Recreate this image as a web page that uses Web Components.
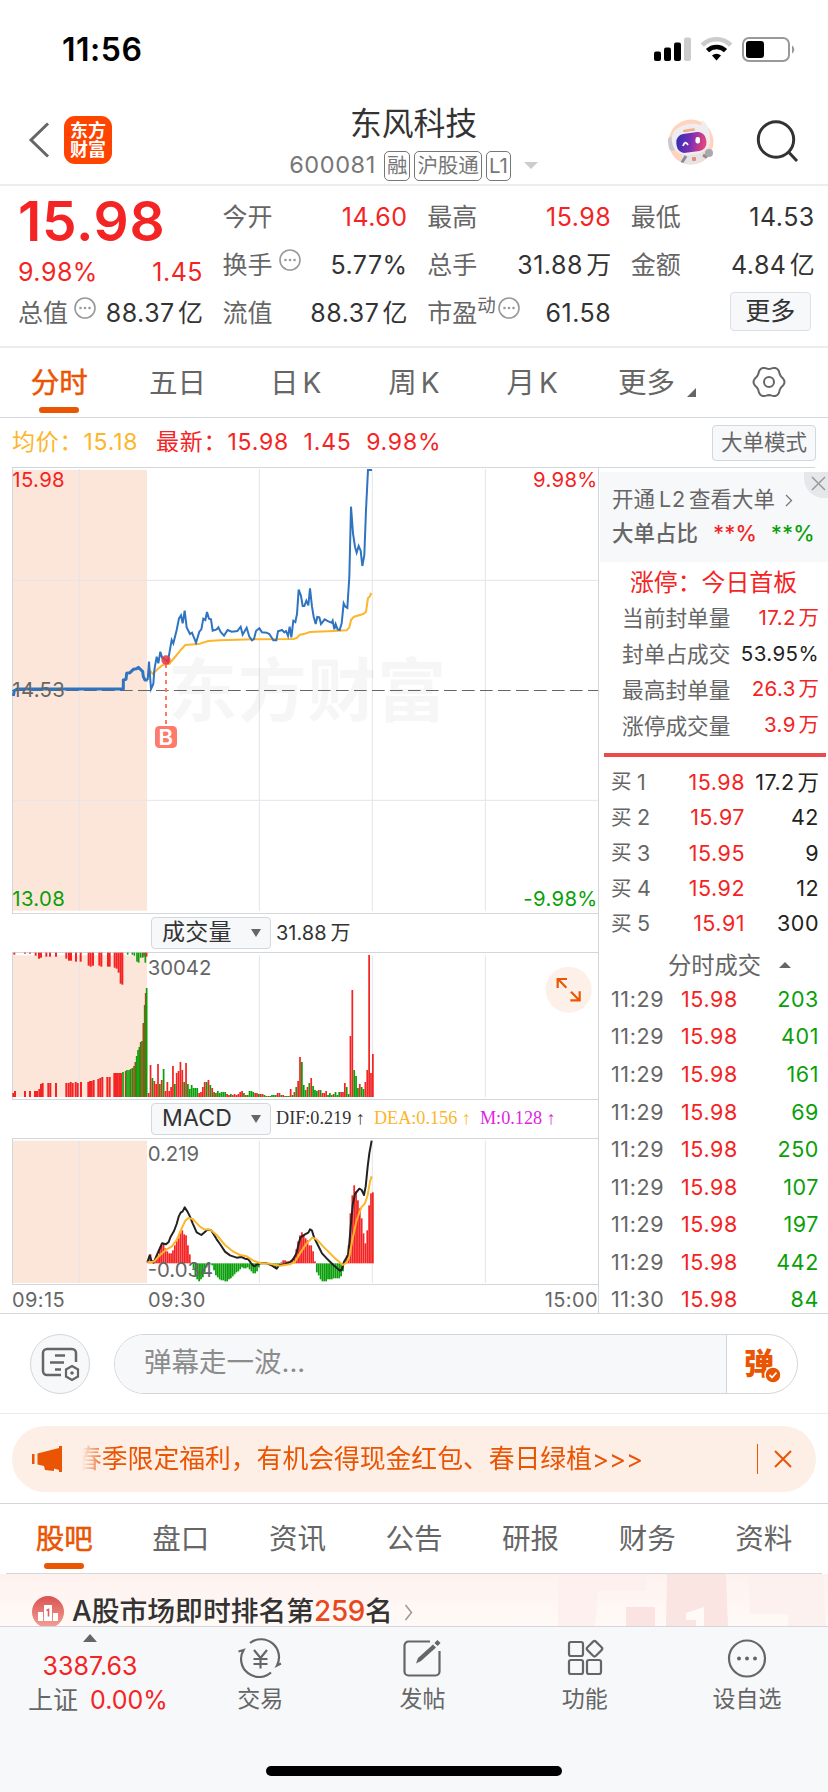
<!DOCTYPE html>
<html lang="zh-CN">
<head>
<meta charset="utf-8">
<meta name="viewport" content="width=device-width">
<title>东风科技 600081</title>
<style>
  html, body { margin: 0; padding: 0; }
  body {
    --red: #f42424;
    --green: #0a9f0a;
    --orange: #ea5504;
    --gray: #666;
    --ink: #333;
    --line: #d3d6da;
    --panel: #f7f8fa;
    width: 828px;
    height: 1792px;
    overflow: hidden;
    background: #fff;
    color: var(--ink);
    font-family: Inter, "Noto Sans CJK SC", sans-serif;
    font-size: 25px;
    line-height: 1.2;
    white-space: nowrap;
  }
</style>
</head>
<body>
<stock-page></stock-page>

<script>
// Shared base: every element only supplies its css and its markup.
class BaseElement extends HTMLElement {
  constructor() {
    super();
    this.attachShadow({ mode: "open" });
  }

  connectedCallback() {
    this.shadowRoot.innerHTML = `
      <style>
        :host { display: block; box-sizing: border-box; }
        * { box-sizing: border-box; }
        svg { display: block; flex: none; }
        .u { margin-left: .13em; letter-spacing: 0; }
        ${this.css()}
      </style>
      ${this.html()}`;
  }

  css() { return ""; }
  html() { return "<slot></slot>"; }
  attr(name) { return this.getAttribute(name) || ""; }
}

// "31.88万" -> number plus a slightly spaced unit
const withUnit = (s) => s.replace(/([万亿])$/, '<span class="u">$1</span>');

class StatusBar extends BaseElement {
  css() {
    return `
      :host { display: flex; height: 100px; padding: 0 33px 0 62px; align-items: center; justify-content: space-between; color: #000; }
      .time { font-size: 32px; font-weight: 600; letter-spacing: .5px; }`;
  }
  html() {
    return `
      <span class="time">11:56</span>
      <svg width="142" height="26" viewBox="0 0 142 26">
        <rect x="1" y="14.500" width="7" height="9.500" rx="2"/>
        <rect x="11" y="10.500" width="7" height="13.500" rx="2"/>
        <rect x="21" y="5.500" width="7" height="18.500" rx="2"/>
        <rect x="31" y="0.500" width="7" height="23.500" rx="2" fill="#ccc"/>
        <g fill="none" stroke-width="4.600">
          <path d="M49.300 8.200a20 20 0 0 1 28.400 0" stroke="#ccc"/>
          <path d="M54.500 13.600a13 13 0 0 1 18 0" stroke="#000"/>
        </g>
        <path d="M59 18.600a6.500 6.500 0 0 1 9 0l-4.500 5z"/>
        <rect x="90" y="1" width="46" height="23" rx="6" fill="none" stroke="#999" stroke-width="2"/>
        <rect x="93" y="4" width="18" height="17" rx="3"/>
        <path d="M139 8.500c3 1.500 3 6.500 0 8z" fill="#999"/>
      </svg>`;
  }
}
customElements.define("status-bar", StatusBar);

class StockHeader extends BaseElement {
  css() {
    return `
      :host { display: grid; grid-template-columns: 1fr auto 1fr; height: 86px; border-bottom: 2px solid #ededed; padding: 0 29px 0 28px; }
      .left { display: flex; align-items: center; gap: 14px; padding-bottom: 4px; }
      .logo { width: 48px; height: 48px; border-radius: 11px; background: #ff4400; color: #fff; font-size: 18px; font-weight: 700; line-height: 19px; text-align: center; padding-top: 5px; }
      .mid { display: flex; flex-direction: column; align-items: center; }
      .name { font-size: 31.800px; line-height: 36px; margin-top: 6px; }
      .sub { display: flex; align-items: center; gap: 4px; height: 31px; margin-top: 8px; color: #777; }
      .code { font-size: 23.500px; margin-right: 4px; letter-spacing: .6px; }
      .tag { height: 30px; border: 1.500px solid #777; border-radius: 5px; font-size: 20.500px; line-height: 27px; padding: 0 2px; }
      .tri { border: 7px solid transparent; border-top: 7px solid #ccc; border-bottom: 0; margin-left: 9px; }
      .right { display: flex; align-items: center; justify-content: flex-end; gap: 41px; }`;
  }
  html() {
    return `
      <div class="left">
        <svg width="22" height="36" viewBox="0 0 22 36"><path d="M20 1.500 3 18l17 16.500" fill="none" stroke="#666" stroke-width="3"/></svg>
        <div class="logo">东方<br>财富</div>
      </div>
      <div class="mid">
        <div class="name">东风科技</div>
        <div class="sub">
          <span class="code">600081</span><span class="tag">融</span><span class="tag">沪股通</span><span class="tag">L1</span>
          <i class="tri"></i>
        </div>
      </div>
      <div class="right">
        <svg width="46" height="46" viewBox="0 0 46 46">
          <defs>
            <linearGradient id="face" x1="0" y1="0" x2="1" y2=".2"><stop offset="0" stop-color="#2a2cb4"/><stop offset=".55" stop-color="#7a2fb5"/><stop offset="1" stop-color="#e0447c"/></linearGradient>
            <clipPath id="disc"><circle cx="23" cy="23" r="22.500"/></clipPath>
          </defs>
          <circle cx="23" cy="23" r="22.500" fill="#ffd3bd"/>
          <g clip-path="url(#disc)">
            <path d="M14 36l9-3 12 1 1 12H12z" fill="#e6e3e6"/>
            <path d="M13 45l5-8M35 36l5 3" stroke="#8d8b93" stroke-width="3"/>
            <rect x="24" y="38" width="4" height="4" rx="1" fill="#e98c72"/>
          </g>
          <g transform="rotate(-8 23 21)">
            <rect x="0" y="15" width="8" height="14" rx="4" fill="#c9c8d0"/>
            <path d="M4 20C4 9 13 5 24 5c5 0 8 1 11 3l2-5c5 4 6 13 5 19 0 10-7 14-19 14S4 31 4 20z" fill="#f0edf1"/>
            <rect x="8" y="14" width="30" height="19" rx="8" fill="url(#face)"/>
          </g>
          <rect x="15" y="10" width="12" height="2.500" rx="1" fill="#f0ad80" transform="rotate(-8 21 11)"/>
          <path d="M15 27q2-6 5-1" fill="none" stroke="#fff" stroke-width="1.800"/>
          <rect x="27.500" y="18" width="4.500" height="6.500" rx="2" fill="#fff"/>
          <circle cx="41" cy="34" r="4" fill="#a9a8b0"/>
        </svg>
        <svg width="44" height="44" viewBox="0 0 44 44" fill="none" stroke="#333" stroke-width="3"><circle cx="21" cy="19.500" r="17.700"/><path d="M33.500 32 42 41"/></svg>
      </div>`;
  }
}
customElements.define("stock-header", StockHeader);

class DotMark extends BaseElement {
  css() { return `:host { display: inline-block; width: 22px; }`; }
  html() {
    return `<svg width="22" height="22" viewBox="0 0 22 22"><circle cx="11" cy="11" r="10" fill="none" stroke="#999" stroke-width="1.600"/><g fill="#999"><circle cx="6.500" cy="11" r="1.300"/><circle cx="11" cy="11" r="1.300"/><circle cx="15.500" cy="11" r="1.300"/></g></svg>`;
  }
}
customElements.define("dot-mark", DotMark);

class QuoteCell extends BaseElement {
  css() {
    return `
      :host { display: flex; align-items: center; justify-content: space-between; height: 48px; color: var(--ink); letter-spacing: .5px; }
      :host([up]) { color: var(--red); }
      .label { display: flex; align-items: center; color: var(--gray); letter-spacing: 0; }
      sup { font-size: 18.500px; line-height: 1; margin-bottom: 16px; }
      dot-mark { margin: 0 0 10px 6px; }
      sup + dot-mark { margin-left: 2px; }`;
  }
  html() {
    const sup = this.attr("sup");
    return `<span class="label">${this.attr("label")}${sup ? `<sup>${sup}</sup>` : ""}${this.hasAttribute("info") ? "<dot-mark></dot-mark>" : ""}</span>
      <span>${withUnit(this.attr("value"))}</span>`;
  }
}
customElements.define("quote-cell", QuoteCell);

class QuoteBoard extends BaseElement {
  css() {
    return `
      :host { display: grid; grid-template-columns: 185px 185px 184px 184px; column-gap: 19.600px; height: 162px; padding: 7px 12px 0 18px; border-bottom: 2px solid #ededed; }
      .price { font-size: 55px; font-weight: 600; line-height: 56px; color: var(--red); letter-spacing: .7px; }
      .chg { display: flex; justify-content: space-between; color: var(--red); line-height: 30px; margin-top: 8px; letter-spacing: .5px; }
      .first quote-cell { margin-top: 2px; }
      .more { display: flex; justify-content: flex-end; align-items: center; height: 44px; padding-right: 4px; }
      .more span { width: 81px; height: 39px; border: 1.500px solid #dcdfe5; border-radius: 4px; background: var(--panel); text-align: center; line-height: 36px; }`;
  }
  html() {
    return `
      <div class="first">
        <div class="price">15.98</div>
        <div class="chg"><span>9.98%</span><span>1.45</span></div>
        <quote-cell label="总值" info value="88.37亿"></quote-cell>
      </div>
      <div>
        <quote-cell label="今开" value="14.60" up></quote-cell>
        <quote-cell label="换手" info value="5.77%"></quote-cell>
        <quote-cell label="流值" value="88.37亿"></quote-cell>
      </div>
      <div>
        <quote-cell label="最高" value="15.98" up></quote-cell>
        <quote-cell label="总手" value="31.88万"></quote-cell>
        <quote-cell label="市盈" sup="动" info value="61.58"></quote-cell>
      </div>
      <div>
        <quote-cell label="最低" value="14.53"></quote-cell>
        <quote-cell label="金额" value="4.84亿"></quote-cell>
        <div class="more"><span>更多</span></div>
      </div>`;
  }
}
customElements.define("quote-board", QuoteBoard);

class TabItem extends BaseElement {
  css() {
    return `
      :host { flex: 1; display: flex; flex-direction: column; align-items: center; height: 100%; padding-top: 17px; color: var(--gray); font-size: 28.500px; line-height: 36px; }
      :host([active]) { color: var(--orange); -webkit-text-stroke: .5px var(--orange); }
      .bar { display: none; width: 40px; height: 6px; border-radius: 3px; background: var(--orange); margin-top: 6px; }
      :host([active]) .bar { display: block; }
      .text { display: flex; align-items: center; }`;
  }
  html() { return `<span class="text"><slot></slot></span><i class="bar"></i>`; }
}
customElements.define("tab-item", TabItem);

class TabStrip extends BaseElement {
  css() { return `:host { display: flex; height: 70px; border-bottom: 1px solid var(--line); }`; }
}
customElements.define("tab-strip", TabStrip);

class InfoRow extends BaseElement {
  css() {
    return `
      :host { display: flex; align-items: center; height: 49px; padding: 0 12px 0 12px; font-size: 23px; color: var(--red); letter-spacing: .8px; }
      .avg { color: #fdb52a; width: 144px; }
      .avg, .now { display: flex; }
      .now span { margin-right: 14.500px; }
      .btn { margin-left: auto; width: 104px; height: 36px; border: 1.500px solid #d3d7de; border-radius: 4px; background: var(--panel); color: var(--gray); font-size: 21.500px; line-height: 33px; text-align: center; letter-spacing: 0; }`;
  }
  html() {
    return `
      <div class="avg">均价：15.18</div>
      <div class="now"><span>最新：15.98</span><span>1.45</span><span>9.98%</span></div>
      <div class="btn">大单模式</div>`;
  }
}
customElements.define("info-row", InfoRow);

// Charts are drawn on a grid of three units to a pixel.
const GRID_X = [238, 778, 1117, 1456];
const UP = "#f42424";
const DOWN = "#0a9f0a";
const STEP = 5.605;

const gridLines = (top, bottom) =>
  GRID_X.map((x) => `<path d="M${x} ${top}V${bottom}" stroke="#e3e5ec" stroke-width="3"/>`).join("");

class PriceChart extends BaseElement {
  html() {
    return `
      <svg width="586" height="447" viewBox="36 21 1758 1341" font-size="61" letter-spacing="1">
        <rect x="38" y="30" width="403" height="1322" fill="#fce6da"/>
        ${gridLines(27, 1353)}
        <path d="M36 361H1794M36 1021H1794" stroke="#e3e5ec" stroke-width="3"/>
        <text x="504" y="769" font-size="208" font-weight="700" fill="#000" fill-opacity=".035">东方财富</text>
        <path d="M36 22.500H1794M36 1360.500H1794M37.500 22V1360" stroke="#d3d6da" stroke-width="3" fill="none"/>
        <path d="M36 691.500H1794" stroke="#666" stroke-width="3" stroke-dasharray="38 16"/>
        <g fill="none" stroke-linejoin="round">
          <polyline stroke="#fdb52a" stroke-width="6" points="443,655 450,632 458,642 470,630 485,617 497,612 508,612 515,603 530,585 542,570 556,555 600,551 625,543 660,541 760,538 880,537 890,534 900,524 915,521 930,516 1000,513 1040,511 1048,502 1053,480 1062,470 1090,462 1098,455 1104,414 1109,410 1114,399"/>
          <path stroke="#2f74c0" stroke-width="9" d="M40 708L43 692 52 687H370V660L378 658 380 640 390 638 400 628 410 626 415 622 422 629 428 634 430 650 435 660H443"/>
          <polyline stroke="#2f74c0" stroke-width="6" stroke-linejoin="miter" points="443,660 447,605 453,687 460,672 463,630 470,590 475,610 481,575 486,592 497,600 503,605 508,580 515,540 520,550 530,510 537,475 543,466 548,490 554,452 560,502 570,522 576,518 588,548 598,515 604,508 610,476 616,480 621,456 627,476 633,478 638,512 650,508 655,502 662,516 672,527 683,510 695,515 712,513 722,500 728,524 740,503 748,530 756,541 762,537 768,513 778,505 786,517 800,518 808,522 820,541 829,541 834,514 846,510 853,517 858,513 864,528 869,500 874,532 880,482 886,486 891,462 896,389 903,408 908,438 913,438 919,422 925,436 930,385 936,440 941,470 947,492 952,471 958,472 963,492 974,478 985,484 995,488 998,482 1003,508 1007,492 1013,508 1019,510 1025,490 1031,430 1036,440 1042,444 1048,350 1053,140 1059,220 1065,260 1070,278 1076,258 1082,272 1087,318 1093,285 1098,150 1104,30 1116,30"/>
        </g>
        <path d="M498 612V798" stroke="#ff7a6b" stroke-width="6" stroke-dasharray="12 12"/>
        <circle cx="498" cy="600" r="14" fill="#e8343f" fill-opacity=".85"/>
        <rect x="465" y="798" width="66" height="66" rx="13" fill="#ff7a6b"/>
        <text x="498" y="854" font-size="66" font-weight="600" fill="#fff" text-anchor="middle">B</text>
        <text x="37" y="80" fill="#f42424">15.98</text>
        <text x="37" y="711" fill="#666">14.53</text>
        <text x="37" y="1338" fill="#0a9f0a">13.08</text>
        <text x="1793" y="80" fill="#f42424" text-anchor="end">9.98%</text>
        <text x="1793" y="1338" fill="#0a9f0a" text-anchor="end">-9.98%</text>
      </svg>`;
  }
}
customElements.define("price-chart", PriceChart);

// Minute volume from 09:30 to 11:30: height in px, r = up, g = down.
const VOLUME = ("4r 32r 19g 16r 13r 33r 13g 17r 28g 6r 15r 6r 10r 31r 13g 24r 26r 35r 27r 15g 34r 13g 8g 12g 9g 9g 9g 4r 5r 10r 15r 15g 17r 12g 9r 5g 4r 6g 4g 5g 5g 5g 3r 2r 3g 2r 3r 2r 3r 5r 6r 4g 2r 2g 6g 6g 5g 4r 4r 3g 3r 3r 2g " +
  "1g 1r 1g 2g 2g 2g 4r 4r 2g 2r 1r 1g 1g 8r 2g 5r 10g 16r 40r 35g 12g 7g 10r 14g 19r 11g 7g 6g 7r 7g 4r 4r 6r 2g 4g 2g 3r 5g 2g 5g 5r 5r 14r 10g 3g 61r 107r 27g 21g 9g 13r 10g 8g 15r 27r 142r 24r 43r").split(" ");

// Call auction: matched volume at the bottom (x, height), unmatched hanging from the top.
const AUCTION = [[40,4],[45,6],[75,6],[90,6],[105,6],[111,6],[118,8],[123,13],[128,14],[145,14],[151,14],[168,14],[199,14],[206,14],[212,15],[218,14],[227,15],[233,14],[243,15],[265,15],[270,16],[275,16],[281,17],[295,18],[301,19],[307,20],[322,20],[329,20],[343,24],[348,24],[353,24],[358,24],[363,24]];
const AUCTION_G = [[369,25,0],[377,26,1],[381,27,0],[387,27,0],[392,28,0],[397,29,1],[402,31,0],[406,35,1],[410,41,0],[414,47,0],[418,50,0],[422,55,1],[426,56,0],[430,74,1],[434,92,0],[437,104,1],[440,109,0]];
const HANGING = [[43,2],[75,1],[90,1],[107,3],[117,6],[123,5],[139,4],[150,4],[168,4],[199,6],[207,8],[213,8],[228,9],[242,9],[266,13],[272,14],[279,13],[298,13],[304,14],[324,14],[329,14],[344,15],[350,16],[356,20],[362,31],[367,32]];
const HANGING_G = [[383,2,0],[397,2,0],[403,3,0],[411,9,0],[416,10,0],[422,5,0],[428,5,0],[432,4,1],[436,10,0],[440,4,1]];

const bar = (x, y, h, color, w = 5.2) => `<rect x="${x - w / 2}" y="${y}" width="${w}" height="${h}" fill="${color}"/>`;

class VolumeChart extends BaseElement {
  html() {
    const minutes = VOLUME.map((v, i) => {
      const h = parseInt(v) * 3;
      return bar(446 + i * STEP, 591 - h, h, v.endsWith("r") ? UP : DOWN);
    });
    const matched = AUCTION.map(([x, h]) => bar(x, 591 - h * 3, h * 3, UP, 6))
      .concat(AUCTION_G.map(([x, h, up]) => bar(x, 591 - h * 3, h * 3, up ? "#a34a18" : DOWN, 5)));
    const hanging = HANGING.map(([x, h]) => bar(x, 158, h * 3, UP, 6))
      .concat(HANGING_G.map(([x, h, up]) => bar(x, 158, h * 3, up ? UP : DOWN, 5)));
    return `
      <svg width="586" height="148" viewBox="36 156 1758 444" font-size="61">
        <rect x="38" y="166" width="403" height="425" fill="#fce6da"/>
        ${gridLines(166, 591)}
        <path d="M36 157.500H1794M36 598.500H1794M37.500 157V598" stroke="#d3d6da" stroke-width="3" fill="none"/>
        ${matched.join("")}${hanging.join("")}${minutes.join("")}
        <text x="443" y="225" fill="#666">30042</text>
        <circle cx="1706" cy="269" r="69" fill="#fdf0e8"/>
        <g transform="translate(1706 269)" fill="none" stroke="#ea5504" stroke-width="6.500">
          <path d="M-33-5V-32H-5M-32-32-7-6M33 5V32H5M32 32 7 6"/>
        </g>
      </svg>`;
  }
}
customElements.define("volume-chart", VolumeChart);

const MACD = [4,9,3,1,4,8,15,18,20,15,12,10,10,13,18,22,25,30,33,29,28,18,9,0,-5,-12,-16,-18,-16,-14,-9,-4,-1,-1,-2,-7,-12,-14,-16,-17,-17,-18,-18,-16,-15,-13,-11,-9,-8,-6,-4,-5,-5,-4,-6,-8,-10,-10,-8,-4,0,0,0,0,0,0,-1,-2,-4,-3,-1,1,3,3,2,2,3,3,7,14,22,28,31,28,25,23,18,18,12,2,-9,-12,-16,-18,-18,-18,-16,-16,-16,-15,-15,-15,-15,-13,-8,3,8,18,50,68,78,72,63,55,45,30,20,33,58,70,71];

class MacdChart extends BaseElement {
  html() {
    const bars = MACD.map((v, i) => bar(446 + i * STEP, v > 0 ? 1090 - v * 3 : 1090, Math.abs(v) * 3, v > 0 ? UP : DOWN));
    return `
      <svg width="586" height="147" viewBox="36 714 1758 441" font-size="61">
        <rect x="38" y="722" width="403" height="427" fill="#fce6da"/>
        ${gridLines(722, 1149)}
        <path d="M36 715.500H1794M36 1153.500H1794M37.500 715V1153" stroke="#d3d6da" stroke-width="3" fill="none"/>
        ${bars.join("")}
        <g fill="none" stroke-width="6" stroke-linejoin="round">
          <polyline stroke="#222" points="442,1088 449,1066 455,1085 461,1088 472,1062 486,1030 498,1033 506,1026 512,1010 522,993 530,972 536,950 542,938 548,934 554,922 562,934 570,950 578,970 590,997 604,1005 612,998 622,989 633,990 650,1018 660,1032 675,1055 690,1066 710,1073 725,1071 735,1076 745,1078 755,1092 762,1099 772,1093 785,1089 800,1090 815,1096 830,1106 838,1095 855,1092 872,1086 882,1074 890,1058 895,1035 901,1013 915,1003 925,998 930,988 936,992 942,1012 955,1038 966,1060 980,1075 1000,1095 1020,1112 1026,1108 1032,1085 1044,1066 1048,1030 1052,980 1058,915 1065,882 1078,866 1085,870 1092,885 1097,860 1103,800 1108,760 1115,722"/>
          <polyline stroke="#fdb52a" points="442,1087 462,1085 480,1065 500,1048 515,1040 530,1020 545,985 556,962 565,954 578,957 600,980 613,988 632,989 650,1005 675,1035 700,1055 720,1065 740,1069 760,1082 780,1089 810,1091 840,1097 870,1093 885,1085 900,1060 920,1030 937,1013 950,1018 970,1040 1000,1070 1028,1095 1040,1088 1048,1070 1057,1020 1070,960 1084,922 1095,910 1103,885 1110,845 1115,829"/>
        </g>
        <text x="443" y="782" fill="#666">0.219</text>
        <text x="443" y="1130" fill="#666">-0.034</text>
      </svg>`;
  }
}
customElements.define("macd-chart", MacdChart);

class IndicatorRow extends BaseElement {
  css() {
    return `
      :host { display: flex; align-items: center; height: 38px; padding-left: 139px; font-size: 20px; }
      .select { display: flex; align-items: center; justify-content: space-between; width: 120px; height: 32px; padding: 0 9px 0 10px; border: 1px solid #d3d7de; border-radius: 4px; background: var(--panel); font-size: 23px; letter-spacing: .2px; margin-right: 5px; }
      .select i { border: 5px solid transparent; border-top: 8px solid #666; border-bottom: 0; }`;
  }
  html() { return `<div class="select"><span>${this.attr("name")}</span><i></i></div><slot></slot>`; }
}
customElements.define("indicator-row", IndicatorRow);

class ChartColumn extends BaseElement {
  css() {
    return `
      :host { width: 598px; padding-left: 12px; }
      .macd { display: flex; gap: 9px; font-family: "Liberation Serif", serif; font-size: 18.200px; }
      .dea { color: #fdb52a; }
      .m { color: #e01fe0; }
      .times { display: flex; height: 28px; align-items: center; color: var(--gray); font-size: 20px; padding-top: 2px; letter-spacing: .4px; }
      .times span:first-child { width: 136px; }
      .times span:last-child { margin-left: auto; }`;
  }
  html() {
    return `
      <price-chart></price-chart>
      <indicator-row name="成交量"><span>31.88<span style="margin-left:4px">万</span></span></indicator-row>
      <volume-chart></volume-chart>
      <indicator-row name="MACD"><span class="macd"><span>DIF:0.219 ↑</span><span class="dea">DEA:0.156 ↑</span><span class="m">M:0.128 ↑</span></span></indicator-row>
      <macd-chart></macd-chart>
      <div class="times"><span>09:15</span><span>09:30</span><span>15:00</span></div>`;
  }
}
customElements.define("chart-column", ChartColumn);

const LIMIT = [["当前封单量", "17.2万", "up"], ["封单占成交", "53.95%", ""], ["最高封单量", "26.3万", "up"], ["涨停成交量", "3.9万", "up"]];
const BIDS = [["1", "15.98", "17.2万"], ["2", "15.97", "42"], ["3", "15.95", "9"], ["4", "15.92", "12"], ["5", "15.91", "300"]];
const TICKS = [["11:29", 203], ["11:29", 401], ["11:29", 161], ["11:29", 69], ["11:29", 250], ["11:29", 107], ["11:29", 197], ["11:29", 442], ["11:30", 84]];

class OrderBook extends BaseElement {
  css() {
    return `
      :host { position: relative; width: 230px; height: 846px; border-left: 1px solid var(--line); font-size: 21px; color: #222; }
      .promo { height: 90px; margin: 5px 0 0 1px; padding: 10px 0 0 12px; background: var(--panel); color: var(--gray); font-size: 21.500px; }
      .promo > div { display: flex; align-items: center; height: 36px; }
      .promo > div + div { height: 32px; font-weight: 500; }
      .promo svg { margin-left: 10px; }
      .promo .l2 { margin: 0 3px 0 4px; letter-spacing: .8px; }
      .close { position: absolute; right: 0; top: 5px; width: 24px; height: 26px; border-radius: 0 0 0 20px; background: #e6e7ea; }
      .title { height: 38px; line-height: 42px; text-align: center; color: var(--red); font-size: 23.900px; }
      .row { display: flex; align-items: center; justify-content: space-between; padding: 0 9px 0 23px; height: 35.900px; font-size: 20.500px; letter-spacing: .4px; }
      .row .k { font-size: 21.700px; letter-spacing: 0; color: var(--gray); }
      .up { color: var(--red); }
      .down { color: var(--green); }
      .rule { height: 4px; margin: 9.500px 2px 8px 5px; background: #eb4b4b; }
      .bid { display: grid; grid-template-columns: 26px 24px 1fr 74px; align-items: center; height: 35.400px; padding: 0 9px 0 12px; font-size: 21.500px; letter-spacing: .5px; text-align: right; }
      .bid span:nth-child(-n+2) { color: var(--gray); text-align: left; font-size: 20.500px; }
      .bid span:nth-child(2) { font-size: 21.500px; }
      .bid .u { font-size: 21.500px !important; color: inherit !important; }
      .sub { display: flex; align-items: center; justify-content: center; height: 39px; color: var(--gray); font-size: 23.300px; padding: 8px 0 0 32px; }
      .sub i { border: 6px solid transparent; border-bottom: 6px solid #666; border-top: 0; margin-left: 18px; margin-bottom: 2px; }
      .tick { display: grid; grid-template-columns: 70px 60px 1fr; align-items: center; height: 37.550px; padding: 0 9px 0 12px; font-size: 21.500px; letter-spacing: .6px; }
      .tick:last-child { height: 28px; padding-bottom: 0; margin-top: 4.800px; }
      .tick span:first-child { color: var(--gray); }
      .tick .down { text-align: right; }`;
  }
  html() {
    return `
      <div class="promo">
        <div>开通<span class="l2">L2</span>查看大单<svg width="8" height="13" viewBox="0 0 8 13"><path d="M1 1l5.500 5.500L1 12" fill="none" stroke="#777" stroke-width="1.300"/></svg></div>
        <div>大单占比<span class="up" style="margin-left:15px">**%</span><span class="down" style="margin-left:14px">**%</span></div>
      </div>
      <div class="close"><svg width="24" height="24" viewBox="0 0 24 24"><path d="M8 5l13 13M21 5L8 18" stroke="#999" stroke-width="1.500"/></svg></div>
      <div class="title">涨停：今日首板</div>
      ${LIMIT.map(([k, v, c]) => `<div class="row"><span class="k">${k}</span><span class="${c}">${withUnit(v)}</span></div>`).join("")}
      <div class="rule"></div>
      ${BIDS.map(([n, p, q]) => `<div class="bid"><span>买</span><span>${n}</span><span class="up">${p}</span><span>${withUnit(q)}</span></div>`).join("")}
      <div class="sub">分时成交<i></i></div>
      ${TICKS.map(([t, q]) => `<div class="tick"><span>${t}</span><span class="up">15.98</span><span class="down">${q}</span></div>`).join("")}`;
  }
}
customElements.define("order-book", OrderBook);

class DanmuBar extends BaseElement {
  css() {
    return `
      :host { display: flex; height: 100px; padding: 20px 30px 0; gap: 24px; border-bottom: 1.500px solid #ebebeb; }
      .round { width: 60px; height: 60px; border: 1px solid var(--line); border-radius: 50%; background: var(--panel); display: flex; align-items: center; justify-content: center; }
      .pill { display: flex; width: 684px; height: 60px; border: 1px solid var(--line); border-radius: 30px; overflow: hidden; }
      .ph { flex: 1; padding-left: 29px; line-height: 55px; background: var(--panel); color: #8c8c8c; font-size: 27.500px; }
      .send { position: relative; width: 71px; border-left: 1px solid var(--line); padding-left: 17px; color: var(--orange); font-size: 30px; font-weight: 900; line-height: 56px; }
      .send svg { position: absolute; left: 37px; top: 31px; }`;
  }
  html() {
    return `
      <div class="round">
        <svg width="40" height="36" viewBox="0 0 40 36" fill="none" stroke="#666" stroke-width="2.500">
          <path d="M21 29H7a4 4 0 0 1-4-4V7a4 4 0 0 1 4-4h25a4 4 0 0 1 4 4v9"/>
          <path d="M15 9.500h10M10 16.500h14M15 23.500h6"/>
          <path d="M32 20l6 3.500v7L32 34l-6-3.500v-7z" stroke-width="2.200"/><circle cx="32" cy="27" r="1.800" fill="#666" stroke="none"/>
        </svg>
      </div>
      <div class="pill">
        <div class="ph">弹幕走一波...</div>
        <div class="send">弹<svg width="18" height="18" viewBox="0 0 18 18"><circle cx="9" cy="9" r="8" fill="#ea5504" stroke="#fff" stroke-width="1.500"/><path d="M5.500 9l2.500 2.500 4.500-5" fill="none" stroke="#fff" stroke-width="1.800"/></svg></div>
      </div>`;
  }
}
customElements.define("danmu-bar", DanmuBar);

class NoticeBar extends BaseElement {
  css() {
    return `
      :host { height: 90px; padding: 12px 12px 0; border-bottom: 1px solid var(--line); }
      .box { display: flex; align-items: center; height: 66px; padding: 0 24px 0 20px; border-radius: 33px; background: #fdeee6; color: var(--orange); }
      .text { flex: 1; overflow: hidden; margin-left: 19px; font-size: 25.800px; line-height: 40px; -webkit-mask-image: linear-gradient(90deg, transparent, #000 24px); mask-image: linear-gradient(90deg, transparent, #000 24px); }
      .text span { margin-left: -6px; }
      .sep { width: 1.500px; height: 30px; background: var(--orange); margin-right: 16px; }`;
  }
  html() {
    return `
      <div class="box">
        <svg width="31" height="28" viewBox="0 0 31 28" fill="#ea5504"><path d="M0 9h2.500v10H0zM5.500 8.500 27 3V1h3v26h-3v-2l-5-1.500V26l-9-1-1-4-6.500-1.500z"/></svg>
        <div class="text"><span>春季限定福利，有机会得现金红包、春日绿植&gt;&gt;&gt;</span></div>
        <i class="sep"></i>
        <svg width="18" height="18" viewBox="0 0 18 18"><path d="M1 1l16 16M17 1L1 17" stroke="#ea5504" stroke-width="2"/></svg>
      </div>`;
  }
}
customElements.define("notice-bar", NoticeBar);

class RankBanner extends BaseElement {
  css() {
    return `
      :host { display: flex; align-items: center; height: 52px; padding: 24px 0 0 32px; overflow: hidden; position: relative; background: linear-gradient(180deg, #fef2ef, #fffaf7); font-size: 27.800px; font-weight: 500; line-height: 32px; }
      .art { position: absolute; right: 0; top: 0; }
      .text { position: relative; margin: -2px 11px 0 8px; }
      b { color: #e8481c; font-weight: 500; letter-spacing: -.3px; }`;
  }
  html() {
    return `
      <svg class="art" width="270" height="52" viewBox="0 0 270 52">
        <path d="M1 0H88V17H40L37 52H-1z" fill="#fdf0ee"/>
        <path d="M109 0h59l2 52h-62z" fill="#fae5e3"/>
        <path d="M68 33h29v19H68z" fill="#fae3e1"/>
        <path d="M190 0h75l3 52h-38V40h-38z" fill="#fdf1ef"/>
        <path d="M128 39l18-6v19h-8V46h-10z" fill="#fffaf7"/>
      </svg>
      <svg width="32" height="32" viewBox="0 0 32 32">
        <defs><linearGradient id="g" x1="0" y1="0" x2="0" y2="1"><stop offset="0" stop-color="#d9534f"/><stop offset="1" stop-color="#f4a09a"/></linearGradient></defs>
        <circle cx="16" cy="16" r="16" fill="url(#g)"/>
        <path d="M6 16h5v9H6zM12 9h8v16h-8zM21 17h5v8h-5z" fill="#fff"/>
        <path d="M14.500 14.500l2-1v7" fill="none" stroke="#d9605b" stroke-width="1.600"/>
      </svg>
      <span class="text">A股市场即时排名第<b>259</b>名</span>
      <svg width="10" height="17" viewBox="0 0 10 17"><path d="M1.500 1l6 7.500-6 7.500" fill="none" stroke="#999" stroke-width="1.500"/></svg>`;
  }
}
customElements.define("rank-banner", RankBanner);

class NavItem extends BaseElement {
  css() {
    return `
      :host { flex: 1; display: flex; flex-direction: column; align-items: center; padding-top: 11px; color: var(--gray); font-size: 23px; line-height: 30px; }
      .icon { height: 40px; margin-bottom: 6px; }`;
  }
  html() { return `<div class="icon"><slot name="icon"></slot></div><slot></slot>`; }
}
customElements.define("nav-item", NavItem);

class BottomNav extends BaseElement {
  css() {
    return `
      :host { display: flex; flex-direction: column; height: 166px; border-top: 1px solid var(--line); background: var(--panel); }
      .items { display: flex; padding-left: 17px; height: 139px; }
      .index { flex: 0 0 162px; display: flex; flex-direction: column; align-items: center; color: var(--red); font-size: 25px; line-height: 34px; letter-spacing: 0; padding-top: 7px; }
      .index i { border: 7px solid transparent; border-bottom: 8px solid #666; border-top: 0; margin-bottom: 7px; }
      .index i, .index span { margin-right: 16px; }
      .index em { font-style: normal; color: var(--gray); margin-right: 12px; letter-spacing: 0; }
      .home { width: 296px; height: 10px; border-radius: 5px; background: #000; margin: 0 auto; }`;
  }
  html() {
    const a = 'slot="icon" width="46" height="40" fill="none" stroke="#666" stroke-width="2.200"';
    return `
      <div class="items">
        <div class="index"><i></i><span>3387.63</span><div><em>上证</em>0.00%</div></div>
        <nav-item>
          <svg ${a} viewBox="0 0 46 40">
            <path d="M13 5a18 18 0 0 1 27 22.500l4-2M34 34.500A18 18 0 0 1 6.500 12l-5 1.500M6.500 12l-.5 2"/>
            <path d="M17 12l6.500 8 6.500-8M16.500 21h14M16.500 26h14M23.500 20v10.500"/>
          </svg>交易</nav-item>
        <nav-item>
          <svg ${a} viewBox="0 0 46 40">
            <path d="M31 3.500H9.500a4 4 0 0 0-4 4v26a4 4 0 0 0 4 4h27a4 4 0 0 0 4-4V13"/>
            <path d="M17 25.500 19 20 34 6.500l3 3L22 23z" fill="#666" stroke="none"/><path d="M37 6.500l3-3" stroke-width="4.500"/>
          </svg>发帖</nav-item>
        <nav-item>
          <svg ${a} viewBox="0 0 46 40">
            <rect x="7" y="4" width="14" height="14" rx="2"/><rect x="7" y="22" width="14" height="14" rx="2"/><rect x="25" y="22" width="14" height="14" rx="2"/>
            <rect x="26.500" y="4.700" width="12" height="12" rx="2" transform="rotate(45 32.500 10.700)"/>
          </svg>功能</nav-item>
        <nav-item>
          <svg ${a} viewBox="0 0 46 40">
            <circle cx="23" cy="20.500" r="18"/>
            <g fill="#666" stroke="none"><circle cx="15" cy="20.500" r="2"/><circle cx="23" cy="20.500" r="2"/><circle cx="31" cy="20.500" r="2"/></g>
          </svg>设自选</nav-item>
      </div>
      <div class="home"></div>`;
  }
}
customElements.define("bottom-nav", BottomNav);

// Six-lobed outline of the settings gear
const gearPath = () => {
  const points = [];
  for (let a = 0; a < 360; a += 6) {
    const t = a * Math.PI / 180;
    const r = 14.3 + 1.2 * Math.cos(6 * t);
    points.push((r * Math.cos(t)).toFixed(2) + " " + (r * Math.sin(t)).toFixed(2));
  }
  return "M" + points.join("L") + "z";
};

class StockPage extends BaseElement {
  css() {
    return `
      :host { display: flex; flex-direction: column; width: 828px; height: 1792px; overflow: hidden; }
      :host > * { flex: none; }
      .trade { display: flex; height: 847px; border-bottom: 1px solid var(--line); overflow: hidden; }
      .mark { border-left: 9px solid transparent; border-bottom: 9px solid #666; margin: 18px -13px 0 12px; }
      .k { margin-left: 4px; font-size: 28px; }
      .posts { height: 70px; margin: 0 6px; }
      .wide { border-top: 1px solid var(--line); margin: 0 12px; width: 803px; margin-bottom: -1px; }`;
  }
  html() {
    return `
      <status-bar></status-bar>
      <stock-header></stock-header>
      <quote-board></quote-board>
      <tab-strip>
        <tab-item active>分时</tab-item>
        <tab-item>五日</tab-item>
        <tab-item>日<span class="k">K</span></tab-item>
        <tab-item>周<span class="k">K</span></tab-item>
        <tab-item>月<span class="k">K</span></tab-item>
        <tab-item>更多<i class="mark"></i></tab-item>
        <tab-item><svg width="34" height="34" viewBox="-17 -17 34 34" fill="none" stroke="#666" stroke-width="2" stroke-linejoin="round"><path d="${gearPath()}"/><circle r="5"/></svg></tab-item>
      </tab-strip>
      <info-row></info-row>
      <div class="wide"></div>
      <div class="trade">
        <chart-column></chart-column>
        <order-book></order-book>
      </div>
      <danmu-bar></danmu-bar>
      <notice-bar></notice-bar>
      <tab-strip class="posts">
        <tab-item active>股吧</tab-item>
        <tab-item>盘口</tab-item>
        <tab-item>资讯</tab-item>
        <tab-item>公告</tab-item>
        <tab-item>研报</tab-item>
        <tab-item>财务</tab-item>
        <tab-item>资料</tab-item>
      </tab-strip>
      <rank-banner></rank-banner>
      <bottom-nav></bottom-nav>`;
  }
}
customElements.define("stock-page", StockPage);
</script>
</body>
</html>
